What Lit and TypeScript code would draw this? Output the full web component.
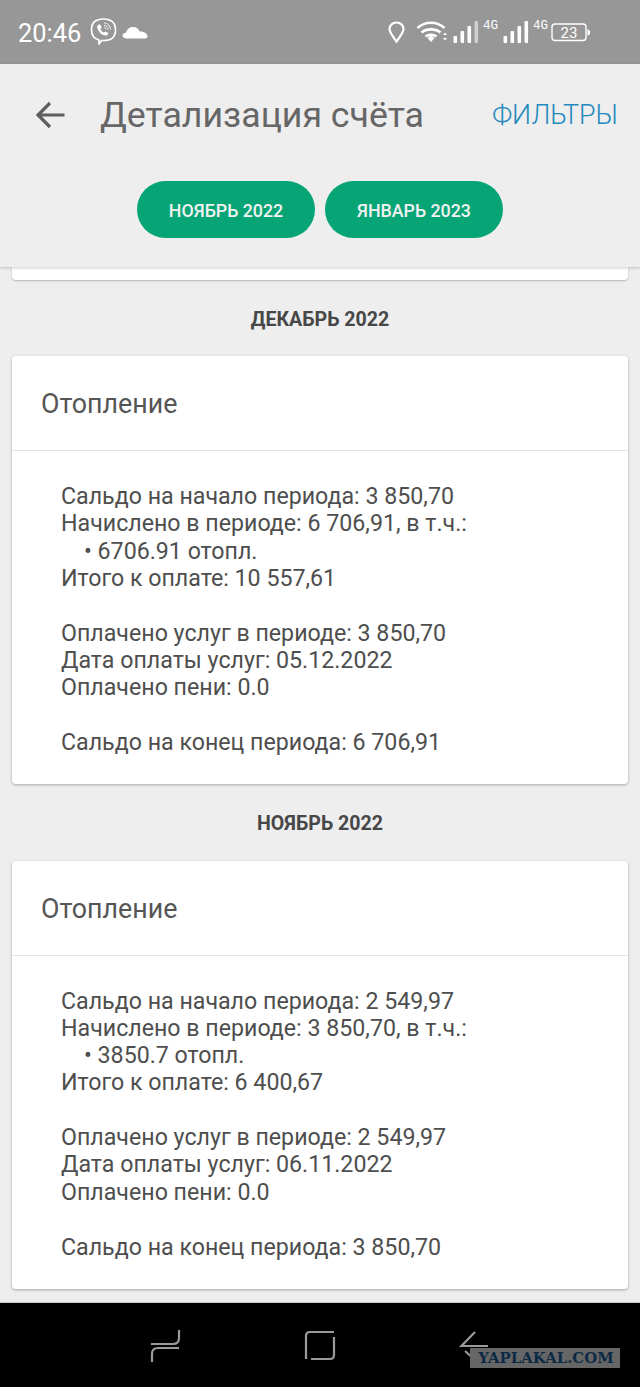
import { LitElement, html, css } from "lit";
import { customElement } from "lit/decorators.js";

const cards = [
  {
    month: "ДЕКАБРЬ 2022",
    lines: [
      ["Сальдо на начало периода: 3 850,70", "Начислено в периоде: 6 706,91, в т.ч.:", "• 6706.91 отопл.", "Итого к оплате: 10 557,61"],
      ["Оплачено услуг в периоде: 3 850,70", "Дата оплаты услуг: 05.12.2022", "Оплачено пени: 0.0"],
      ["Сальдо на конец периода: 6 706,91"],
    ],
  },
  {
    month: "НОЯБРЬ 2022",
    lines: [
      ["Сальдо на начало периода: 2 549,97", "Начислено в периоде: 3 850,70, в т.ч.:", "• 3850.7 отопл.", "Итого к оплате: 6 400,67"],
      ["Оплачено услуг в периоде: 2 549,97", "Дата оплаты услуг: 06.11.2022", "Оплачено пени: 0.0"],
      ["Сальдо на конец периода: 3 850,70"],
    ],
  },
];

@customElement("app-root")
export class AppRoot extends LitElement {
  static styles = css`
    :host { display: flex; flex-direction: column; width: 640px; height: 1387px; overflow: hidden; background: #eeeeee; font-family: Roboto, "Noto Sans", sans-serif; position: relative; }
    .status { height: 64px; flex: none; background: #979797; display: flex; align-items: center; color: #fff; padding: 0 0 0 18px; box-sizing: border-box; }
    .time { font-size: 25.4px; line-height: 64px; width: 71px; padding-top: 1px; box-sizing: border-box; }
    .status svg { display: block; flex: none; }
    .spacer { flex: 1; }
    .appbar { height: 203px; flex: none; box-sizing: border-box; background: #eeeeee; box-shadow: 0 1px 3px rgba(0,0,0,.2); position: relative; z-index: 2; display: flex; flex-direction: column; }
    .toolbar { display: flex; align-items: center; height: 102px; padding: 0 22px 0 35px; }
    .back { width: 65px; flex: none; }
    .back svg { display: block; }
    .title { font-size: 35.7px; color: #666; flex: 1; white-space: nowrap; }
    .filters { font-size: 26.8px; font-weight: 300; color: #2288bd; white-space: nowrap; }
    .pills { display: flex; justify-content: center; gap: 10px; padding-top: 15px; }
    .pill { width: 178px; height: 57px; border-radius: 29px; background: #07a576; color: #f2f2f2; font-size: 17.8px; font-weight: 500; display: flex; align-items: center; justify-content: center; padding-top: 1px; box-sizing: border-box; }
    .content { flex: 1; min-height: 0; padding: 0 12px; overflow: hidden; display: flex; flex-direction: column; }
    .stub { height: 13px; flex: none; background: #fff; border-radius: 0 0 4px 4px; box-shadow: 0 1px 2px rgba(0,0,0,.25); }
    .month { height: 76px; flex: none; display: flex; align-items: center; justify-content: center; font-size: 19.6px; font-weight: 700; color: #474747; padding-top: 3px; box-sizing: border-box; }
    .card + .month { height: 76.5px; }
    .card { flex: none; height: 428px; background: #fff; border-radius: 4px; box-shadow: 0 1px 3px rgba(0,0,0,.3); display: flex; flex-direction: column; }
    .card-h { height: 95px; flex: none; box-sizing: border-box; border-bottom: 1px solid #e3e3e3; display: flex; align-items: center; padding: 2px 0 0 29px; font-size: 26.8px; color: #555; }
    .card-b { padding: 32px 0 0 49px; font-size: 23.2px; line-height: 27.3px; color: #4e4e4e; display: flex; flex-direction: column; gap: 27.5px; }
    .in { padding-left: 23px; }
    .navbar { height: 85px; flex: none; background: #000; border-top: 1px solid #ccc; box-sizing: border-box; position: relative; }
    .navbar svg { position: absolute; left: 0; top: -1px; }
    .wm { position: absolute; left: 470px; top: 45px; width: 150px; height: 20px; background: #666; color: #0d2a45; font-family: "DejaVu Serif", serif; font-weight: 700; font-size: 14.9px; line-height: 20px; text-align: center; white-space: nowrap; padding-left: 2px; box-sizing: border-box; }
  `;

  render() {
    return html`
      <div class="status">
        <span class="time">20:46</span>
        <svg width="32" height="32" viewBox="0 0 32 32" fill="none" stroke="#fff" stroke-width="1.7">
          <path d="M10 28 V24 C4.5 22.5 2.5 19.5 2.5 14 C2.5 6 7 3 14.5 3 C22 3 26.5 6 26.5 14 C26.5 21.5 22 24.5 14.5 24.5 C13.8 24.5 13 24.5 12.6 24.5 L10 28 Z" stroke-linejoin="round"/>
          <path d="M9 9 C7.5 10 8 12.5 10 15.5 C12 18.5 15 20 17.5 19.5 C19 19 19.5 17.8 19.2 17 L16.4 15.4 L15 16.5 C13.3 16 12 14.5 11.5 12.4 L12.7 11.2 L11.2 8.6 C10.4 8.4 9.6 8.5 9 9 Z" fill="#fff" stroke="none"/>
          <path d="M15 7 C18.5 7 21.5 10 21.5 13.5 M15 9.4 C17.3 9.4 19.2 11.2 19.2 13.5 M15 11.6 C16 11.6 17 12.4 17 13.5" stroke-width=".9"/>
        </svg>
        <svg width="26" height="16" viewBox="0 0 26 16" style="margin-left:1px" fill="#fff">
          <path d="M4.5 14.5 C2 14.5 .5 13.3 .5 11.6 C.5 9.9 2 8.8 4 8.7 C5 5 8 3 11 3 C14.5 3 16.8 5 17.6 7.6 C21 7.4 25.5 9.5 25.5 12.2 C25.5 13.6 24 14.5 22.5 14.5 Z"/>
        </svg>
        <span class="spacer"></span>
        <svg width="210" height="64" viewBox="385 0 210 64" style="margin-right:45px" fill="#fff">
          <path d="M396.5 41.5 C392.5 36 389.5 32.5 389.5 29 C389.5 25.2 392.6 22.5 396.5 22.5 C400.4 22.5 403.5 25.2 403.5 29 C403.5 32.5 400.5 36 396.5 41.5 Z" fill="none" stroke="#fff" stroke-width="2.2"/>
          <g fill="none" stroke="#fff" stroke-width="2.7">
            <path d="M417.5 28 C425 21 437 21 444.5 28"/>
            <path d="M421.5 32.5 C426.5 28.3 435.5 28.3 440.5 32.5"/>
            <path d="M425.5 36.5 C428.5 34.3 433.5 34.3 436.5 36.5"/>
          </g>
          <path d="M427.5 38 L431 35.5 L434.5 38 L431 42 Z"/>
          <path d="M443 35 l2 -2.4 l2 2.4 Z M443 38 l2 2.4 l2 -2.4 Z"/>
          <rect x="453.5" y="36" width="3.6" height="7" rx="1"/><rect x="460.5" y="31" width="3.6" height="12" rx="1"/><rect x="467.5" y="26" width="3.6" height="17" rx="1"/><rect x="474.5" y="21" width="3.6" height="22" rx="1" fill="#cfcfcf"/>
          <rect x="503.5" y="36" width="3.6" height="7" rx="1"/><rect x="510.5" y="31" width="3.6" height="12" rx="1"/><rect x="517.5" y="26" width="3.6" height="17" rx="1"/><rect x="524.5" y="21" width="3.6" height="22" rx="1"/>
          <text x="483" y="29" font-family="Liberation Mono, monospace" font-size="13" textLength="15" lengthAdjust="spacingAndGlyphs">4G</text>
          <text x="533" y="29" font-family="Liberation Mono, monospace" font-size="13" textLength="15" lengthAdjust="spacingAndGlyphs">4G</text>
          <rect x="552" y="24" width="34" height="16.5" rx="3" fill="none" stroke="#fff" stroke-width="1.4"/>
          <text x="569" y="38" font-family="Roboto, sans-serif" font-size="15" text-anchor="middle">23</text>
          <path d="M587.5 29 L590 31 V34 L587.5 36 Z"/>
        </svg>
      </div>
      <div class="appbar">
        <div class="toolbar">
          <div class="back">
            <svg width="30" height="28" viewBox="0 0 30 28" fill="none" stroke="#5f5f5f" stroke-width="3.2"><path d="M29.5 14 H3 M15 2 L3 14 L15 26"/></svg>
          </div>
          <div class="title">Детализация счёта</div>
          <div class="filters">ФИЛЬТРЫ</div>
        </div>
        <div class="pills">
          <div class="pill">НОЯБРЬ 2022</div>
          <div class="pill">ЯНВАРЬ 2023</div>
        </div>
      </div>
      <div class="content">
        <div class="stub"></div>
        ${cards.map(
          (c) => html`
            <div class="month">${c.month}</div>
            <div class="card">
              <div class="card-h">Отопление</div>
              <div class="card-b">
                ${c.lines.map(
                  (g) => html`<div>${g.map((l) => html`<div class=${l.startsWith("•") ? "in" : ""}>${l}</div>`)}</div>`
                )}
              </div>
            </div>
          `
        )}
      </div>
      <div class="navbar">
        <svg width="640" height="85" viewBox="0 1301 640 85" fill="none" stroke="#9a9a9a" stroke-width="2.2">
          <path d="M179 1329 V1337 Q179 1343 173 1343 H151"/>
          <path d="M179 1347 H158 Q152 1347 152 1353 V1361"/>
          <path d="M306 1358 V1335 Q306 1331 310 1331 H334"/>
          <path d="M334 1336 V1354 Q334 1358 330 1358 H311"/>
          <path d="M488 1345 H461.5 L475 1331"/>
          <path d="M465 1350 L474 1358"/>
        </svg>
        <div class="wm">YAPLAKAL.COM</div>
      </div>
    `;
  }
}
